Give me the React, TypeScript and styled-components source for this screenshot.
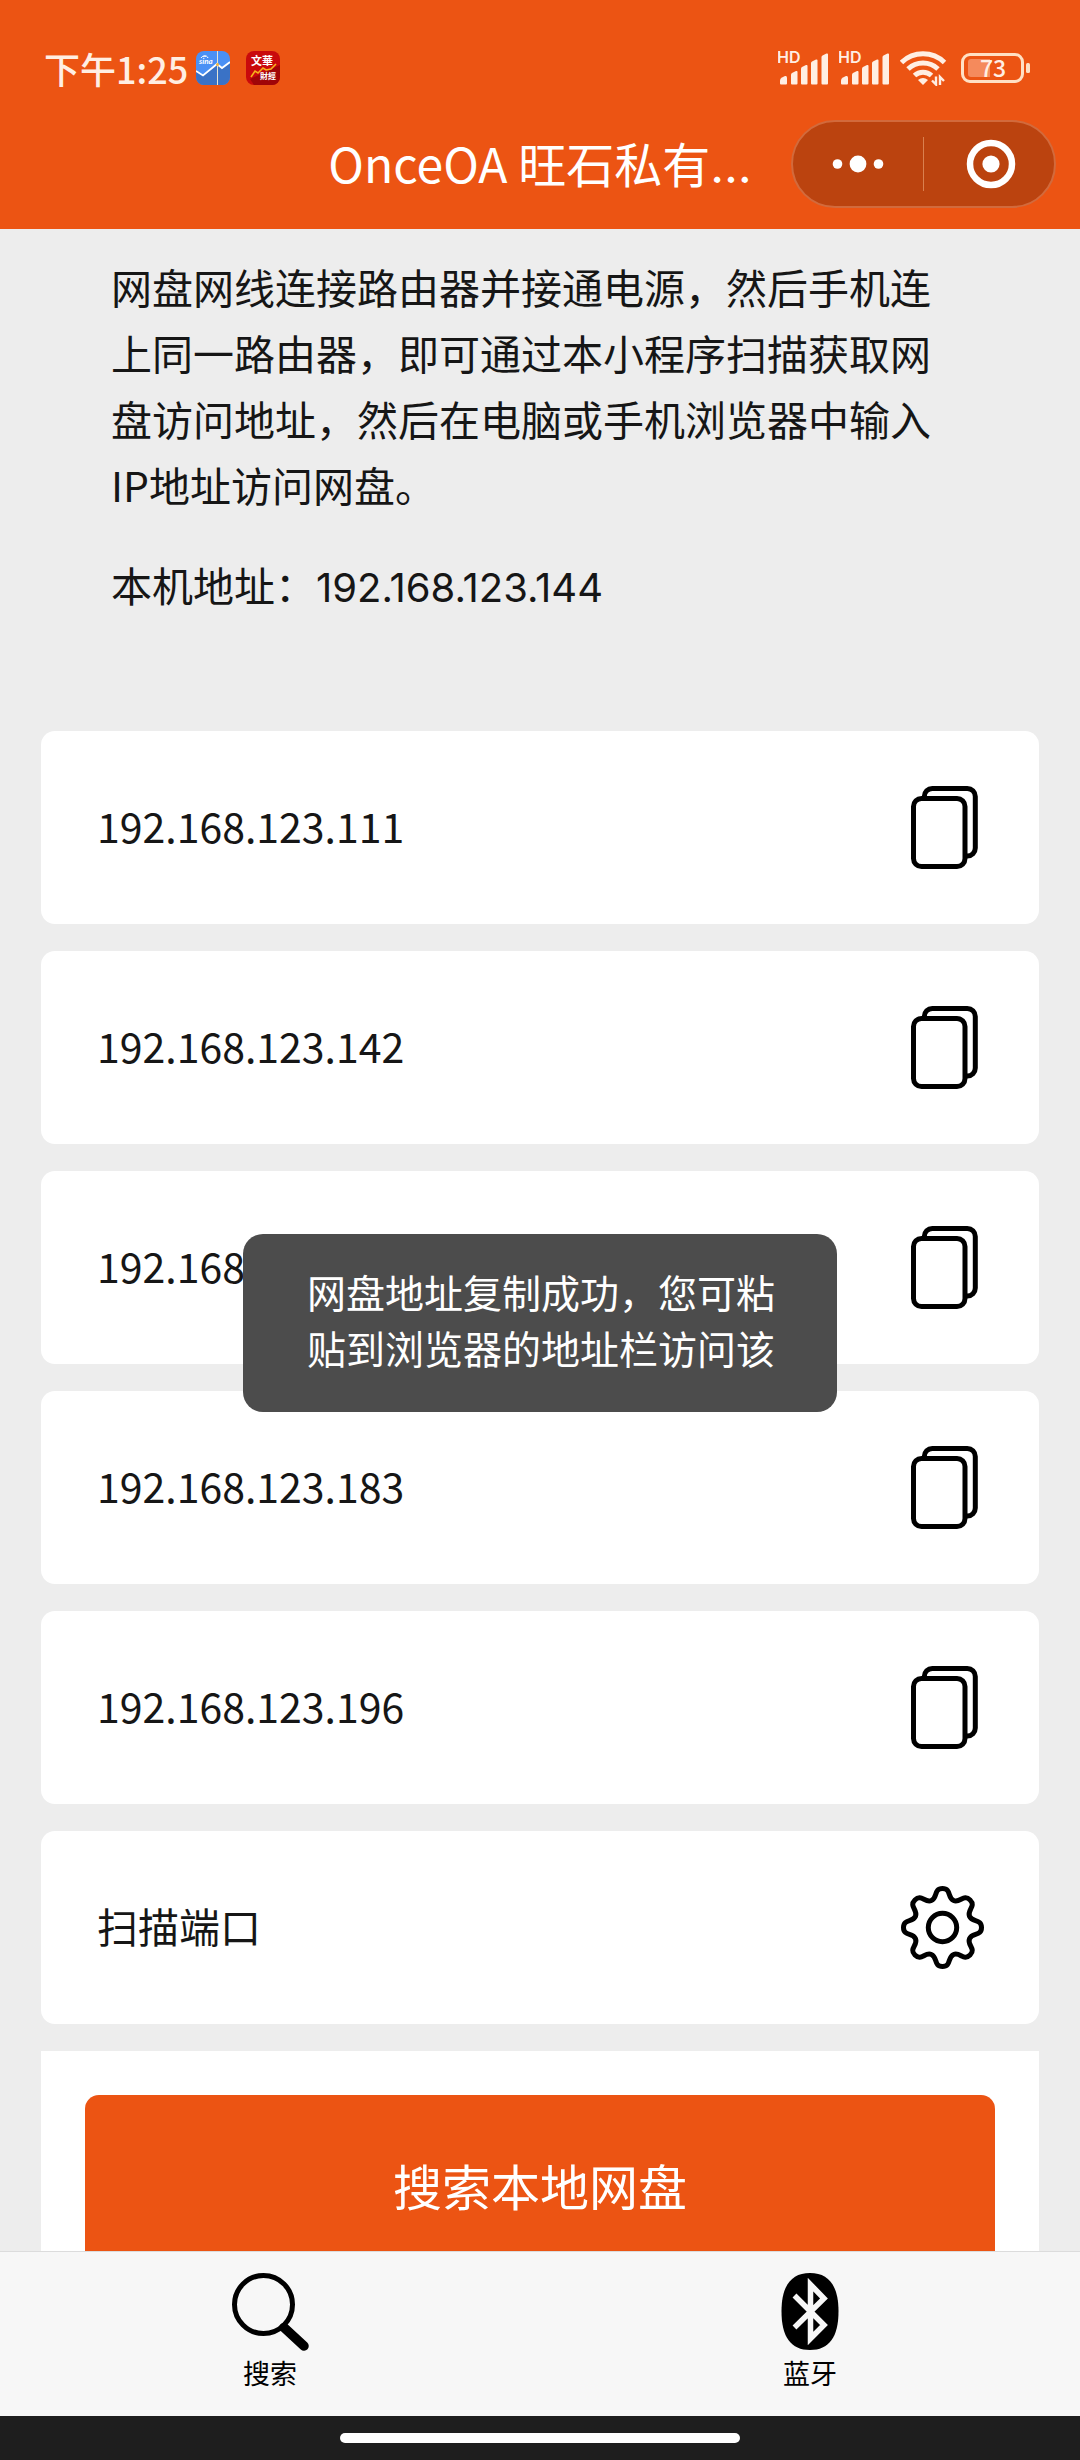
import React from "react";
import styled, { createGlobalStyle } from "styled-components";

const orange = "#ec5413";
const statusInk = "#ffeee3";
const textStack = '"Noto Sans CJK SC", "Noto Sans", sans-serif';

const GlobalStyle = createGlobalStyle`
  *, *::before, *::after { box-sizing: border-box; }
  body { margin: 0; background: #ededed; }
  button { font: inherit; color: inherit; border: 0; padding: 0; background: none; cursor: pointer; }
`;

const Screen = styled.div`
  display: flex;
  flex-direction: column;
  height: 100vh;
  background: #ededed;
  color: #161616;
  font-family: ${textStack};
  font-size: 41px;
`;

const Header = styled.header`
  flex: none;
  background: ${orange};
  color: #fff;
`;

const StatusBar = styled.div`
  display: flex;
  align-items: center;
  justify-content: space-between;
  height: 99px;
  padding: 36px 49px 0 44px;
  color: ${statusInk};
`;

const StatusGroup = styled.div<{ $gap: number }>`
  display: flex;
  align-items: center;
  gap: ${(p) => p.$gap}px;
`;

const Clock = styled.time`
  margin-right: -8px;
  font-size: 36px;
  font-weight: 500;
  line-height: 40px;
`;

const NavBar = styled.div`
  display: grid;
  grid-template-columns: 1fr auto 1fr;
  align-items: center;
  height: 130px;
  padding: 0 24px;
`;

const Title = styled.h1`
  grid-column: 2;
  margin: 0;
  font-size: 48px;
  font-weight: 400;
  line-height: 60px;
  white-space: nowrap;
`;

const Ellipsis = styled.span`
  font-family: Inter, sans-serif;
`;

const Capsule = styled.div`
  justify-self: end;
  display: flex;
  align-items: center;
  width: 265px;
  height: 88px;
  border: 2px solid #d26a3c;
  border-radius: 44px;
  background: #bb430f;
`;

const CapsuleButton = styled.button`
  flex: 1;
  display: flex;
  align-items: center;
  justify-content: center;
  height: 100%;
`;

const CapsuleDivider = styled.span`
  width: 1px;
  height: 54px;
  background: #d9804f;
`;

const Stage = styled.div`
  position: relative;
  flex: 1;
  min-height: 0;
  display: flex;
  flex-direction: column;
`;

const Content = styled.main`
  flex: 1;
  min-height: 0;
  overflow: hidden;
  padding: 24px 41px 0;
`;

const Intro = styled.section`
  padding: 0 100px 0 70px;
  margin-bottom: 110px;
  line-height: 66px;
`;

const Paragraph = styled.p`
  margin: 0 0 34px;
`;

const LocalAddress = styled.span`
  font-family: Inter, sans-serif;
  font-size: 40px;
`;

const CardList = styled.ul`
  list-style: none;
  margin: 0 0 27px;
  padding: 0;
  display: flex;
  flex-direction: column;
  gap: 27px;
`;

const Card = styled.li`
  display: flex;
  align-items: center;
  justify-content: space-between;
  height: 193px;
  padding: 0 55px 0 56px;
  border-radius: 14px;
  background: #fff;
`;

const CardLabel = styled.span`
  padding-bottom: 5px;
`;

const IconButton = styled.button`
  display: flex;
  color: #000;
`;

const SearchPanel = styled.section`
  padding: 44px;
  background: #fff;
`;

const SearchButton = styled.button`
  width: 100%;
  height: 184px;
  padding-bottom: 5px;
  border-radius: 14px;
  background: ${orange};
  color: #fff;
  font-size: 49px;
`;

const TabBar = styled.nav`
  flex: none;
  display: flex;
  height: 165px;
  border-top: 1px solid #dcdcdc;
  background: #f7f7f7;
`;

const Tab = styled.a`
  flex: 1;
  display: flex;
  flex-direction: column;
  align-items: center;
  gap: 2px;
  padding-top: 21px;
  color: #000;
  font-size: 27px;
  line-height: 40px;
  text-decoration: none;
`;

const ToastLayer = styled.div`
  position: absolute;
  inset: 0;
  display: flex;
  align-items: center;
  justify-content: center;
  pointer-events: none;
`;

const Toast = styled.div`
  width: 594px;
  padding: 29px 62px 37px 64px;
  border-radius: 20px;
  background: #4c4c4c;
  color: #fff;
  font-size: 39px;
  line-height: 56px;
`;

const HomeBar = styled.footer`
  flex: none;
  display: flex;
  align-items: center;
  justify-content: center;
  height: 44px;
  background: #1e1e1e;
`;

const HomeIndicator = styled.span`
  width: 37%;
  height: 10px;
  border-radius: 5px;
  background: #fff;
`;

const StockIcon = () => (
  <svg width="34" height="34" viewBox="0 0 34 34" aria-hidden="true">
    <rect width="34" height="34" rx="8" fill="#4a90f5" />
    <path d="M0 20l7 5 14-12 5 5 8-7v15a8 8 0 0 1-8 8H8a8 8 0 0 1-8-8z" fill="#3a72c6" />
    <path d="M0 20l7 4.500 14-11.500 5 4 8-6" fill="none" stroke="#fff" strokeWidth="1.800" />
    <path d="M21.500 0v34" stroke="#e6e3d2" strokeWidth="1" />
    <circle cx="21.500" cy="13.500" r="1.500" fill="#f0b43c" />
    <path d="M5 7c2-3 6-3 7 0M7 6c1-1 3-1 3 0" fill="none" stroke="#fff" strokeWidth="1" />
    <text x="3" y="13" fill="#fff" fontFamily="Lato, sans-serif" fontSize="8" fontWeight="700" fontStyle="italic">sina</text>
  </svg>
);

const FuturesIcon = () => (
  <svg width="34" height="34" viewBox="0 0 34 34" aria-hidden="true">
    <rect width="34" height="34" rx="8" fill="#c90a0c" />
    <path d="M4 28L34 14v12a8 8 0 0 1-8 8H8z" fill="#a00508" />
    <text x="5" y="14" fill="#fff" fontFamily={textStack} fontSize="11" fontWeight="700">文華</text>
    <path d="M5 26l4-6 3 2 5-5 3 2 5-1 5-5" fill="none" stroke="#f7b21b" strokeWidth="1.600" />
    <text x="14" y="28" fill="#fff" fontFamily={textStack} fontSize="8" fontWeight="700">財經</text>
  </svg>
);

const SignalIcon = () => (
  <svg width="51" height="46" viewBox="0 -6 51 46" fill={statusInk} aria-hidden="true">
    <text x="-1" y="12" fontFamily="Inter, sans-serif" fontSize="16" fontWeight="600">HD</text>
    <path d="M2 32.500v-3q0-2 2-3l3-1.500q2-.5 2 1.500v6q0 1-1 1H3q-1 0-1-1z" />
    <path d="M13 32.500v-9q0-1 1-1.500l4-2q1.500-.5 1.500 1v11.500q0 1-1 1H14q-1 0-1-1z" />
    <path d="M23 32.500V17.500q0-1 1-1.500l4-2q1.500-.5 1.500 1v17.500q0 1-1 1H24q-1 0-1-1z" />
    <path d="M33 32.500V12q0-1 1-1.500l4-2q1.500-.5 1.500 1v23q0 1-1 1H34q-1 0-1-1z" />
    <path d="M43.500 32.500V6q0-1 1-1.500l4-2q1.500-.5 1.500 1v29q0 1-1 1h-4.500q-1 0-1-1z" />
  </svg>
);

const WifiIcon = () => (
  <svg width="51" height="36" viewBox="0 0 51 36" aria-hidden="true">
    <g fill="none" stroke={statusInk} strokeWidth="5">
      <path d="M1.500 12.500a31 31 0 0 1 43 0" />
      <path d="M8 19a22 22 0 0 1 30 0" />
      <path d="M14.500 25.500a12.500 12.500 0 0 1 17 0" />
    </g>
    <path d="M18 30q5-4 10 0L23 35z" fill={statusInk} />
    <path d="M36 26.500v8l-4-4M40 35v-8l4 4" fill="none" stroke={statusInk} strokeWidth="2.400" />
  </svg>
);

const BatteryIcon = () => (
  <svg width="70" height="40" viewBox="0 -4 70 40" role="img" aria-label="电量 73">
    <rect x="1.500" y="2.500" width="60" height="27" rx="7.500" fill="none" stroke="#ffe0c4" strokeWidth="3" />
    <path d="M10 7h19v18H10q-3 0-3-3V10q0-3 3-3z" fill="#f58a5c" />
    <rect x="65" y="11" width="4" height="10" rx="1.500" fill="#ffe0c4" />
    <text x="32" y="24.500" textAnchor="middle" fill={statusInk} fontFamily={textStack} fontSize="23" fontWeight="500">73</text>
  </svg>
);

const MoreIcon = () => (
  <svg width="54" height="20" viewBox="0 0 54 20" fill="#fff" aria-hidden="true">
    <circle cx="6.500" cy="10" r="4.800" />
    <circle cx="27" cy="10" r="8.400" />
    <circle cx="47.500" cy="10" r="4.800" />
  </svg>
);

const CloseIcon = () => (
  <svg width="54" height="50" viewBox="0 0 54 50" aria-hidden="true">
    <circle cx="29" cy="25" r="21" fill="none" stroke="#fff" strokeWidth="6.500" />
    <circle cx="29" cy="25" r="8.600" fill="#fff" />
  </svg>
);

const CopyIcon = () => (
  <svg width="83" height="83" viewBox="0 0 83 83" fill="none" stroke="currentColor" strokeWidth="5" aria-hidden="true">
    <rect x="12.500" y="12.500" width="51.500" height="68" rx="8" />
    <path d="M23.300 12v-1.500a8 8 0 0 1 8-8h35a8 8 0 0 1 8 8v51.500a8 8 0 0 1-8 8H64" />
  </svg>
);

// Eight rounded teeth: each half tooth is one cubic between a peak and a valley.
const gearPath = (() => {
  const centre = 41.5;
  const at = (index: number, shift: number) => {
    const peak = index % 2 === 0;
    const radius = peak ? 39 : 29.2;
    const handle = peak ? 9 : 7;
    const angle = (index * Math.PI) / 8;
    const x = centre + radius * Math.sin(angle) + shift * handle * Math.cos(angle);
    const y = centre - radius * Math.cos(angle) + shift * handle * Math.sin(angle);
    return `${x.toFixed(2)} ${y.toFixed(2)}`;
  };
  let d = `M${at(0, 0)}`;
  for (let i = 0; i < 16; i += 1) {
    d += `C${at(i, 1)} ${at(i + 1, -1)} ${at(i + 1, 0)}`;
  }
  return `${d}Z`;
})();

const GearIcon = () => (
  <svg width="83" height="83" viewBox="0 0 83 83" fill="none" stroke="currentColor" strokeWidth="5" aria-hidden="true">
    <path d={gearPath} />
    <circle cx="41.500" cy="41.500" r="14.200" />
  </svg>
);

const SearchIcon = () => (
  <svg width="78" height="78" viewBox="0 0 78 78" fill="none" stroke="currentColor" aria-hidden="true">
    <circle cx="32.500" cy="31.500" r="29" strokeWidth="5" />
    <path d="M53 54.500L73 73" strokeWidth="9.500" strokeLinecap="round" />
    <path d="M50.500 52l5 5" strokeWidth="7" />
  </svg>
);

const BluetoothIcon = () => (
  <svg width="78" height="78" viewBox="0 0 78 78" aria-hidden="true">
    <path d="M39 0C58 0 67.500 13 67.500 38.500S58 77 39 77 10.500 64 10.500 38.500 20 0 39 0z" fill="currentColor" />
    <path d="M23.500 22.500L53 52 39.500 65.500v-54L53 25.500 23.500 54.500" fill="none" stroke="#f7f7f7" strokeWidth="5.500" />
  </svg>
);

const addresses = [
  "192.168.123.111",
  "192.168.123.142",
  "192.168.123.168",
  "192.168.123.183",
  "192.168.123.196",
];

export default function App() {
  return (
    <>
      <GlobalStyle />
      <Screen>
        <Header>
          <StatusBar>
            <StatusGroup $gap={16}>
              <Clock>下午1:25</Clock>
              <StockIcon />
              <FuturesIcon />
            </StatusGroup>
            <StatusGroup $gap={10}>
              <SignalIcon />
              <SignalIcon />
              <WifiIcon />
              <BatteryIcon />
            </StatusGroup>
          </StatusBar>
          <NavBar>
            <Title>
              OnceOA 旺石私有<Ellipsis>…</Ellipsis>
            </Title>
            <Capsule>
              <CapsuleButton type="button" aria-label="更多">
                <MoreIcon />
              </CapsuleButton>
              <CapsuleDivider />
              <CapsuleButton type="button" aria-label="关闭">
                <CloseIcon />
              </CapsuleButton>
            </Capsule>
          </NavBar>
        </Header>

        <Stage>
          <Content>
            <Intro>
              <Paragraph>
                网盘网线连接路由器并接通电源，然后手机连上同一路由器，即可通过本小程序扫描获取网盘访问地址，然后在电脑或手机浏览器中输入IP地址访问网盘。
              </Paragraph>
              <Paragraph>
                本机地址：<LocalAddress>192.168.123.144</LocalAddress>
              </Paragraph>
            </Intro>

            <CardList>
              {addresses.map((address) => (
                <Card key={address}>
                  <CardLabel>{address}</CardLabel>
                  <IconButton type="button" aria-label={`复制 ${address}`}>
                    <CopyIcon />
                  </IconButton>
                </Card>
              ))}
              <Card>
                <CardLabel>扫描端口</CardLabel>
                <IconButton type="button" aria-label="设置扫描端口">
                  <GearIcon />
                </IconButton>
              </Card>
            </CardList>

            <SearchPanel>
              <SearchButton type="button">搜索本地网盘</SearchButton>
            </SearchPanel>
          </Content>

          <TabBar>
            <Tab href="#search" aria-current="page">
              <SearchIcon />
              搜索
            </Tab>
            <Tab href="#bluetooth">
              <BluetoothIcon />
              蓝牙
            </Tab>
          </TabBar>

          <ToastLayer>
            <Toast role="status">网盘地址复制成功，您可粘贴到浏览器的地址栏访问该</Toast>
          </ToastLayer>
        </Stage>

        <HomeBar>
          <HomeIndicator />
        </HomeBar>
      </Screen>
    </>
  );
}
